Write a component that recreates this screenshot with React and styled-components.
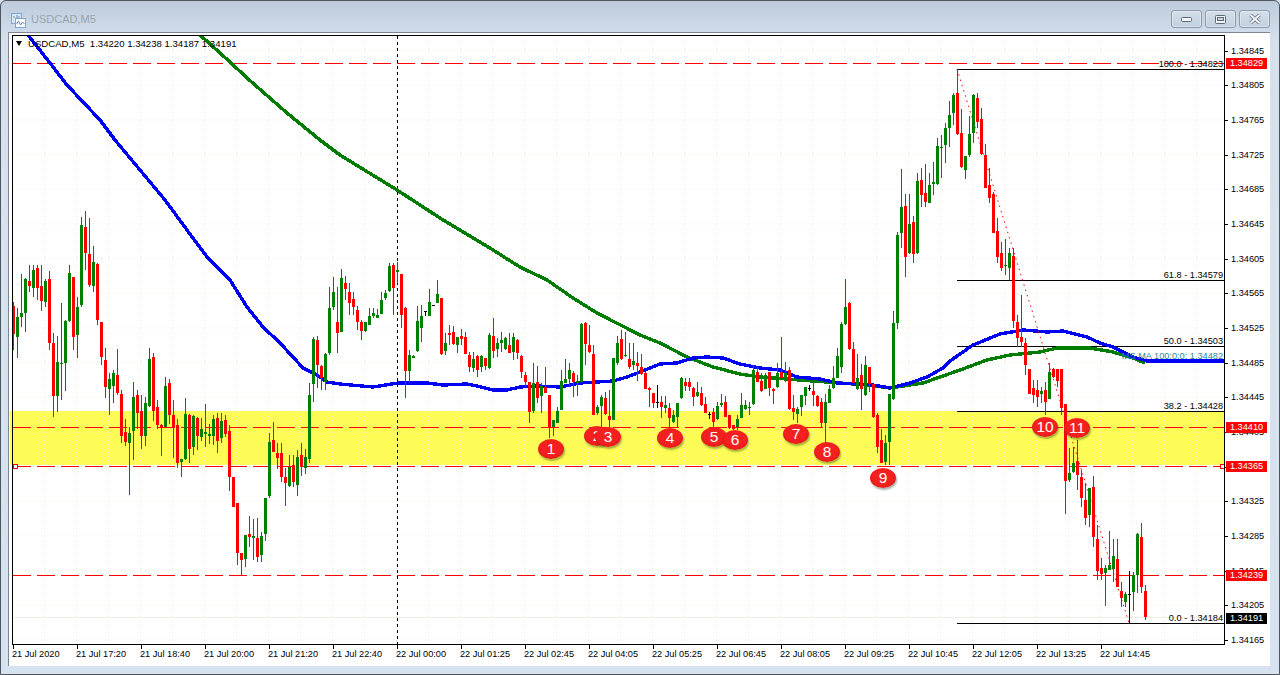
import React from "react";
import styled, { createGlobalStyle } from "styled-components";

const GlobalStyle = createGlobalStyle`
	html, body {
		margin: 0;
		padding: 0;
		background: #d6e2ef;
		overflow: hidden;
	}
`;

const Window = styled.div`
	box-sizing: border-box;
	width: 1280px;
	height: 675px;
	display: flex;
	flex-direction: column;
	border: 1px solid #4d555f;
	border-radius: 6px 6px 0 0;
	background: linear-gradient(180deg, #bccada 0%, #d6e1ed 6%, #d6e2ef 100%);
	font-family: "Liberation Sans", Arial, sans-serif;
`;

const TitleBar = styled.div`
	box-sizing: border-box;
	flex: 0 0 31px;
	display: flex;
	align-items: flex-start;
	padding: 9px 9px 0 10px;
	gap: 5px;
`;

const TitleIcon = styled.svg`
	width: 15px;
	height: 16px;
	margin-top: 3px;
`;

const TitleText = styled.span`
	flex: 1;
	font-size: 11px;
	line-height: 18px;
	color: #9aa3af;
`;

const WindowButtons = styled.div`
	display: flex;
	gap: 3px;
`;

const WindowButton = styled.div`
	box-sizing: border-box;
	width: 31px;
	height: 18px;
	display: flex;
	align-items: center;
	justify-content: center;
	border: 1px solid #8c9aa9;
	border-radius: 3px;
	background: linear-gradient(180deg, #d3dee9 0%, #c2d0de 100%);
	box-shadow: inset 0 0 0 1px rgba(255, 255, 255, 0.35);
`;

const ClientArea = styled.div`
	flex: 1;
	display: flex;
	flex-direction: column;
	margin: 0 9px 9px 7px;
	padding: 2px 0 0 3px;
	border-top: 1px solid #7d8794;
	border-left: 1px solid #7d8794;
	background: #fff;
	isolation: isolate;
`;

const ChartRow = styled.div`
	display: flex;
`;

const PlotArea = styled.div`
	position: relative;
	box-sizing: border-box;
	flex: 0 0 1213px;
	height: 610px;
	border: 1px solid #000;
`;

const PlotSvg = styled.svg`
	display: block;
	width: 1211px;
	height: 608px;
	overflow: hidden;
	font-family: "Liberation Sans", Arial, sans-serif;
	font-size: 9.2px;
`;

const SupportBand = styled.div`
	position: absolute;
	z-index: -1;
	left: -3px;
	right: 0;
	top: 375px;
	height: 54px;
	background: #fdfb55;
`;

const ChartLegend = styled.div`
	position: absolute;
	left: 3px;
	top: 0;
	display: flex;
	align-items: center;
	gap: 6px;
	height: 15px;
	font-size: 9.6px;
	color: #000;
	white-space: pre;

	&::before {
		content: "";
		border-left: 3.5px solid transparent;
		border-right: 3.5px solid transparent;
		border-top: 5px solid #000;
	}
`;

const Marker = styled.span`
	position: absolute;
	left: ${(p) => p.$x - 26}px;
	top: ${(p) => p.$y - 46}px;
	width: 26px;
	height: 20px;
	display: flex;
	align-items: center;
	justify-content: center;
	border-radius: 50%;
	background: radial-gradient(ellipse at 50% 40%, #f42020 55%, #c40e0e 100%);
	box-shadow: 1px 2px 2px rgba(0, 40, 0, 0.35);
	color: #fff;
	font-size: 15.5px;
	line-height: 20px;
`;

const PriceScale = styled.div`
	position: relative;
	flex: 1;
	display: flex;
	flex-direction: column;
	gap: 22.66px;
	padding-top: 9.7px;
`;

const PriceTick = styled.div`
	position: relative;
	height: 12px;
	padding-left: 6px;
	font-size: 9.2px;
	line-height: 12px;
	color: #000;

	&::before {
		content: "";
		position: absolute;
		left: 0;
		top: 6px;
		width: 3px;
		height: 1px;
		background: #000;
	}
`;

const PriceTag = styled.div`
	position: absolute;
	left: 1px;
	top: ${(p) => p.$y - 40.5}px;
	width: 41px;
	height: 11px;
	background: ${(p) => p.$bg};
	color: #fff;
	font-size: 9.2px;
	line-height: 11px;
	text-align: center;
`;

const TimeAxis = styled.div`
	display: flex;
	height: 20px;
`;

const TimeCell = styled.div`
	position: relative;
	flex: 0 0 64px;
	font-size: 9.2px;
	line-height: 17px;
	color: #000;
	white-space: nowrap;

	&::before {
		content: "";
		position: absolute;
		left: 1px;
		top: -1px;
		width: 1px;
		height: 4px;
		background: #000;
	}
`;

const prices = [
	"1.34845", "1.34805", "1.34765", "1.34725", "1.34685", "1.34645",
	"1.34605", "1.34565", "1.34525", "1.34485", "1.34445", "1.34405",
	"1.34365", "1.34325", "1.34285", "1.34245", "1.34205", "1.34165",
];

const tags = [
	{ y: 63, text: "1.34829", bg: "#fa0505" },
	{ y: 427, text: "1.34410", bg: "#fa0505" },
	{ y: 466, text: "1.34365", bg: "#fa0505" },
	{ y: 575, text: "1.34239", bg: "#fa0505" },
	{ y: 618, text: "1.34191", bg: "#000" },
];

const times = [
	"21 Jul 2020", "21 Jul 17:20", "21 Jul 18:40", "21 Jul 20:00", "21 Jul 21:20", "21 Jul 22:40",
	"22 Jul 00:00", "22 Jul 01:25", "22 Jul 02:45", "22 Jul 04:05", "22 Jul 05:25", "22 Jul 06:45",
	"22 Jul 08:05", "22 Jul 09:25", "22 Jul 10:45", "22 Jul 12:05", "22 Jul 13:25", "22 Jul 14:45",
];

const markers = [
	[1, 551, 449], [2, 597, 436], [3, 608, 437], [4, 670, 438], [5, 714, 437], [6, 735, 440],
	[7, 796, 434], [8, 827, 452], [9, 883, 478], [10, 1045, 427], [11, 1077, 428],
];

// one row per bar: high, body top, body bottom, low, colour (all in chart pixels)
const r = "r", g = "g", k = "k";
const candles = [
	[302,306,334,350,r],[308,317,337,358,g],[274,313,317,327,g],[278,279,313,332,g],[265,281,286,292,r],[265,270,288,297,g],[265,268,288,300,r],[265,286,301,311,r],
	[279,281,302,307,g],[271,279,343,350,r],[333,343,396,417,r],[336,362,396,412,g],[303,363,364,400,g],[320,321,363,391,g],[265,273,321,322,g],[277,277,337,350,r],
	[297,307,335,358,g],[217,225,305,307,g],[211,227,253,270,r],[218,254,285,287,r],[246,262,286,292,g],[263,264,320,325,r],[322,322,357,365,r],[348,360,387,398,r],
	[373,379,389,415,g],[370,373,386,403,g],[349,375,393,395,r],[390,394,436,443,r],[419,432,442,446,r],[427,433,443,495,g],[382,397,431,460,g],[390,395,413,429,r],
	[395,411,436,449,r],[397,403,436,446,g],[348,359,406,407,g],[353,357,411,421,r],[400,407,425,429,r],[424,425,427,456,r],[377,386,427,427,g],[379,383,415,424,r],
	[400,415,427,458,r],[419,425,463,468,r],[459,459,462,477,g],[398,414,459,460,g],[414,415,449,463,r],[415,416,447,455,g],[417,418,436,450,r],[418,429,437,441,g],
	[404,432,434,447,g],[424,434,436,444,g],[415,419,436,445,g],[413,418,441,453,r],[413,421,438,443,g],[415,420,434,437,r],[425,431,477,491,r],[477,477,507,507,r],
	[503,503,553,565,r],[553,553,560,575,r],[535,535,559,567,g],[516,534,537,547,r],[519,536,538,560,g],[518,538,557,562,r],[532,536,555,562,g],[498,498,534,541,g],
	[433,442,496,498,g],[422,440,452,452,r],[443,453,458,469,r],[443,453,477,482,r],[468,477,483,506,r],[455,467,486,487,g],[455,465,482,487,r],[450,457,485,496,g],
	[443,455,467,476,r],[449,457,468,474,g],[383,395,459,463,g],[337,339,384,402,g],[336,340,365,388,r],[365,366,378,390,r],[353,354,382,390,g],[287,308,353,355,g],
	[277,292,307,310,g],[287,322,333,353,r],[269,278,332,332,g],[276,283,289,300,r],[283,292,303,315,r],[292,299,307,315,r],[306,310,322,330,r],[320,322,331,340,r],
	[322,322,331,332,g],[308,316,325,325,g],[308,313,316,318,g],[309,315,318,318,g],[292,300,314,314,g],[290,293,298,300,g],[263,266,291,292,g],[263,265,288,315,r],
	[262,270,272,283,g],[274,274,315,328,r],[307,308,371,398,r],[350,355,371,382,g],[355,356,358,358,g],[306,321,351,352,g],[305,316,328,342,g],[311,311,312,316,k],
	[289,302,316,316,g],[305,305,306,306,k],[280,294,303,303,g],[298,298,354,355,r],[333,343,351,355,g],[325,333,335,345,r],[326,332,344,345,r],[337,337,345,353,g],
	[329,336,339,345,r],[332,337,354,354,r],[352,355,367,372,r],[352,359,368,372,g],[355,356,370,377,r],[355,356,367,372,g],[358,358,366,370,r],[333,335,368,369,g],
	[318,336,351,358,r],[338,343,349,357,g],[332,340,343,352,g],[337,338,349,350,g],[333,345,353,353,r],[333,337,352,360,g],[339,340,353,359,r],[355,356,372,378,r],
	[372,375,382,387,r],[382,382,412,423,r],[363,383,411,413,g],[366,382,398,403,r],[383,386,396,413,g],[367,387,393,393,r],[395,395,428,438,r],[420,420,427,436,g],
	[407,411,423,423,g],[370,381,410,410,g],[359,379,383,383,g],[363,370,379,387,g],[371,373,382,397,r],[375,381,383,396,g],[323,324,382,382,g],[322,323,344,365,r],
	[325,345,352,353,r],[345,354,415,415,r],[405,407,413,415,g],[395,397,406,427,g],[392,398,414,415,r],[390,416,420,428,r],[358,358,420,420,g],[336,343,363,365,g],
	[330,339,359,360,r],[332,355,356,357,g],[343,359,367,369,r],[343,361,365,370,g],[352,363,366,381,r],[354,367,374,375,r],[372,373,389,389,r],[387,388,390,407,r],
	[393,393,403,408,r],[385,402,403,408,k],[396,402,407,418,r],[396,405,408,413,g],[403,408,418,427,r],[410,415,422,423,g],[403,403,417,427,g],[377,378,398,399,g],
	[378,382,386,391,r],[378,382,387,391,r],[387,388,397,406,r],[382,392,396,397,g],[387,393,405,406,r],[397,404,413,413,r],[412,414,415,419,k],[408,412,422,427,r],
	[402,406,419,420,g],[394,403,405,407,g],[396,402,417,417,r],[415,415,428,429,r],[425,425,429,430,r],[415,419,427,430,g],[393,405,418,418,g],[400,405,409,410,g],
	[402,407,408,415,g],[365,370,404,405,g],[367,372,382,382,r],[373,381,391,392,r],[373,375,389,389,g],[372,372,388,396,r],[388,389,391,404,r],[363,373,387,388,g],
	[337,372,378,379,r],[362,373,378,382,g],[367,370,409,410,r],[395,408,412,420,r],[407,409,414,423,g],[395,395,407,416,g],[387,387,396,405,g],[385,388,389,391,k],
	[380,391,395,406,r],[395,396,406,407,r],[398,402,423,427,r],[394,402,423,443,g],[385,389,403,403,g],[366,378,388,389,g],[348,356,378,378,g],[322,324,367,373,g],
	[279,307,324,325,g],[302,303,349,350,r],[342,349,383,383,r],[354,378,389,390,g],[364,375,389,410,r],[356,365,395,396,g],[367,367,384,392,r],[384,384,417,418,r],
	[413,415,447,453,r],[429,440,463,463,r],[435,443,462,465,g],[394,394,442,465,g],[311,323,399,400,g],[232,235,323,329,g],[169,207,233,248,g],[194,206,257,277,r],
	[194,224,253,254,g],[216,222,254,263,r],[173,181,253,254,g],[168,180,195,207,r],[164,193,202,207,r],[173,185,203,203,g],[162,182,184,195,g],[138,146,184,185,g],
	[135,147,148,178,g],[123,128,145,163,g],[101,115,128,147,g],[93,95,113,125,g],[70,93,134,135,r],[109,133,167,168,r],[156,156,170,179,g],[116,134,155,157,g],
	[94,95,133,143,g],[93,98,122,128,r],[108,119,154,155,r],[144,155,188,188,r],[168,185,198,203,r],[192,194,233,233,r],[218,231,257,263,r],[242,253,268,271,r],
	[239,265,266,275,g],[248,253,268,280,g],[248,256,321,328,r],[315,322,338,347,r],[295,337,342,347,r],[338,343,365,375,r],[369,369,394,394,r],[380,388,395,403,r],
	[380,390,397,407,r],[387,391,394,403,g],[382,390,402,415,r],[363,372,399,399,g],[368,369,377,378,r],[369,369,381,387,r],[369,369,408,415,r],[404,404,481,514,r],
	[448,473,480,482,g],[447,463,472,473,g],[440,461,475,490,r],[470,477,498,507,r],[483,500,518,525,r],[488,488,515,527,g],[476,487,537,547,r],[525,539,571,580,r],
	[558,568,574,580,r],[565,568,573,606,g],[531,565,570,570,g],[539,556,569,582,g],[539,559,587,587,r],[582,591,598,607,r],[592,594,602,607,g],[571,594,595,623,k],
	[572,575,592,611,g],[533,534,575,593,g],[523,537,587,593,r],[585,591,617,620,r],
];

const colours = { r: "#ff0000", g: "#008000", k: "#000000" };

const blueLine = "28,35 50,63 67,85 100,120 115,140 140,170 165,200 187,230 207,257 230,280 247,307 263,327 280,343 293,357 303,368 313,373 320,377 327,382 340,384 373,387 398,383 427,383 443,385 467,384 477,386 493,390 507,390 520,387 537,386 560,387 580,383 613,381 627,377 640,372 660,364 677,363 693,358 707,357 723,358 740,364 760,368 780,370 797,377 820,379 837,383 857,384 873,385 890,388 910,383 927,377 943,368 950,361 973,345 1000,334 1023,330 1047,332 1063,331 1087,337 1100,343 1113,347 1133,357 1147,361 1224,361";

const greenLine = "200,35 230,62 247,78 287,113 320,140 340,155 397,190 440,218 493,250 520,267 547,280 573,298 597,313 640,335 660,343 687,357 713,367 740,374 760,377 787,379 813,381 840,383 867,385 890,388 923,383 960,370 987,360 1010,355 1040,352 1057,348 1090,348 1113,352 1133,358 1145,363";

const hLevels = [63.5, 427.5, 466.5, 575.5];
const fibLevels = [69.5, 280.5, 346.5, 411.5, 623.5];
const fibLabels = [
	["100.0 - 1.34823", 66.6],
	["61.8 - 1.34579", 277.5],
	["50.0 - 1.34503", 344],
	["38.2 - 1.34428", 409],
	["0.0 - 1.34184", 620.6],
];

const gridY = prices.map((_, i) => 50.5 + i * 34.66);
const gridX = Array.from({ length: 38 }, (_, i) => 12.5 + i * 32);

const Candle = ({ bar, index }) => {
	const [high, top, bottom, low, colour] = bar;
	const x = 13 + index * 4;
	const fill = colours[colour];
	return (
		<g fill={fill}>
			<rect x={x} y={high} width={1} height={low - high} />
			<rect x={x - 1} y={top} width={3} height={Math.max(bottom - top, 1)} />
		</g>
	);
};

const Chart = () => (
	<PlotSvg viewBox="13 36 1211 608">
		<g stroke="#efe9d8" strokeDasharray="1 3">
			{gridY.map((y) => (
				<line key={y} x1="13" x2="1224" y1={y} y2={y} />
			))}
			{gridX.map((x) => (
				<line key={x} x1={x} x2={x} y1="36" y2="644" />
			))}
		</g>
		<line x1="13" x2="1224" y1="617.5" y2="617.5" stroke="#f1ede0" />
		<line x1="397.5" x2="397.5" y1="36" y2="644" stroke="#000" strokeDasharray="3 3" />
		<g stroke="#ff0000">
			{hLevels.map((y) => (
				<line key={y} x1="13" x2="1224" y1={y} y2={y} strokeDasharray="18 6" />
			))}
			<rect x="13.5" y="464.5" width="4" height="4" fill="#fff" />
			<rect x="1220.5" y="464.5" width="4" height="4" fill="#fff" />
		</g>
		<g stroke="#000">
			{fibLevels.map((y) => (
				<line key={y} x1="957" x2="1224" y1={y} y2={y} />
			))}
		</g>
		<polyline points={greenLine} fill="none" stroke="#007c00" strokeWidth="3.4" strokeLinejoin="round" shapeRendering="crispEdges" />
		<polyline points={blueLine} fill="none" stroke="#0000f5" strokeWidth="3.4" strokeLinejoin="round" shapeRendering="crispEdges" />
		<line x1="957" y1="69" x2="1129" y2="623" stroke="#ff0000" strokeDasharray="1.5 4" />
		{candles.map((bar, i) => (
			<Candle key={i} bar={bar} index={i} />
		))}
		<g textAnchor="end" fill="#000">
			{fibLabels.map(([text, y]) => (
				<text key={text} x="1223" y={y}>
					{text}
				</text>
			))}
			<text x="1223" y="358.5" fill="#1f8a9a">
				MS MA 100:0:0: 1.34482
			</text>
		</g>
	</PlotSvg>
);

const ChartIcon = () => (
	<TitleIcon viewBox="0 0 15 16">
		<rect x="0.5" y="0.5" width="10" height="10" fill="#d9e8f7" stroke="#7aa6d6" />
		<rect x="4.5" y="5.5" width="10" height="9" fill="#fff" stroke="#7aa6d6" />
		<path d="M2 4h2M6 2v3M8 3v2" stroke="#5f8fc0" fill="none" />
		<path d="M5.5 11l2-3 2 4 2-3 2 2" stroke="#4f86bf" fill="none" />
	</TitleIcon>
);

const App = () => (
	<Window>
		<GlobalStyle />
		<TitleBar>
			<ChartIcon />
			<TitleText>USDCAD,M5</TitleText>
			<WindowButtons>
				<WindowButton>
					<svg width="11" height="5" viewBox="0 0 11 5">
						<rect x="0.5" y="0.5" width="10" height="4" rx="1" fill="#f2f5f8" stroke="#5c6874" />
					</svg>
				</WindowButton>
				<WindowButton>
					<svg width="11" height="9" viewBox="0 0 11 9">
						<rect x="0.5" y="0.5" width="10" height="8" rx="1" fill="#eef2f6" stroke="#5c6874" />
						<rect x="2.5" y="2.5" width="6" height="3" fill="#c6d3e0" stroke="#5c6874" />
					</svg>
				</WindowButton>
				<WindowButton>
					<svg width="12" height="10" viewBox="0 0 12 10">
						<path d="M1.5 1L10.5 9M10.5 1L1.5 9" stroke="#5c6874" strokeWidth="3.4" />
						<path d="M1.5 1L10.5 9M10.5 1L1.5 9" stroke="#f4f6f8" strokeWidth="2" />
					</svg>
				</WindowButton>
			</WindowButtons>
		</TitleBar>
		<ClientArea>
			<ChartRow>
				<PlotArea>
					<SupportBand />
					<Chart />
					<ChartLegend>{"USDCAD,M5  1.34220 1.34238 1.34187 1.34191"}</ChartLegend>
					{markers.map(([n, x, y]) => (
						<Marker key={n} $x={x} $y={y}>
							{n}
						</Marker>
					))}
				</PlotArea>
				<PriceScale>
					{prices.map((p) => (
						<PriceTick key={p}>{p}</PriceTick>
					))}
					{tags.map((t) => (
						<PriceTag key={t.text} $y={t.y} $bg={t.bg}>
							{t.text}
						</PriceTag>
					))}
				</PriceScale>
			</ChartRow>
			<TimeAxis>
				{times.map((t) => (
					<TimeCell key={t}>{t}</TimeCell>
				))}
			</TimeAxis>
		</ClientArea>
	</Window>
);

export default App;
